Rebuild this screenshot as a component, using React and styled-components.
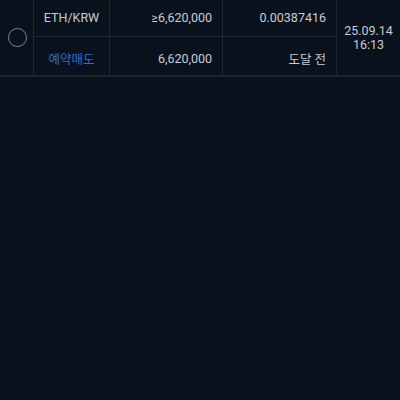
import React from "react";
import styled, { createGlobalStyle } from "styled-components";

const GlobalStyle = createGlobalStyle`
    html, body {
        margin: 0;
        padding: 0;
        background: #08111c;
    }

    body {
        font-family: Roboto, "Noto Sans CJK KR", sans-serif;
        min-height: 400px;
    }
`

const Table = styled.div`
    display: grid;
    grid-template-columns: 34px 76px 113px 114px 63px;
    grid-template-rows: 40px 38px;
    margin-top: -3px;
    border-bottom: 2px solid #1b2430;
    background: #08111c;
    color: #c8cdd5;
    font-size: 12.5px;
`

const Cell = styled.div`
    box-sizing: border-box;
    display: flex;
    align-items: center;
    justify-content: ${props => props.align === "right" ? "flex-end" : "center"};
    padding: ${props => props.offset || 0}px ${props => props.align === "right" ? "10px" : "0"} 0 0;
    border-right: ${props => props.last ? "0" : "1px solid #1d2733"};
    border-bottom: ${props => props.divider ? "1px solid #1d2733" : "0"};
    color: ${props => props.blue ? "#2f6fd2" : "inherit"};
    white-space: nowrap;
`

// Cells that cover both rows: the radio button and the order date
const SpanCell = styled(Cell)`
    grid-row: 1 / span 2;
    grid-column: ${props => props.col};
    flex-direction: column;
    line-height: 14px;
    padding-top: 3px;
`

const Radio = styled.span`
    box-sizing: border-box;
    width: 19px;
    height: 19px;
    border-radius: 50%;
    border: 1.5px solid #7e8895;
    margin-left: 1px;
`

const order = {
    market: "ETH/KRW",
    type: "예약매도",
    watchPrice: "≥6,620,000",
    price: "6,620,000",
    volume: "0.00387416",
    status: "도달 전",
    date: "25.09.14",
    time: "16:13"
};

export default function App() {
    return (
        <>
            <GlobalStyle />
            <Table>
                <SpanCell col={1}>
                    <Radio />
                </SpanCell>
                <Cell divider offset={2}>{order.market}</Cell>
                <Cell divider offset={2} align="right">{order.watchPrice}</Cell>
                <Cell divider offset={2} align="right">{order.volume}</Cell>
                <SpanCell col={5} last>
                    <span>{order.date}</span>
                    <span>{order.time}</span>
                </SpanCell>
                <Cell blue offset={5}>{order.type}</Cell>
                <Cell offset={5} align="right">{order.price}</Cell>
                <Cell offset={5} align="right">{order.status}</Cell>
            </Table>
        </>
    );
}
